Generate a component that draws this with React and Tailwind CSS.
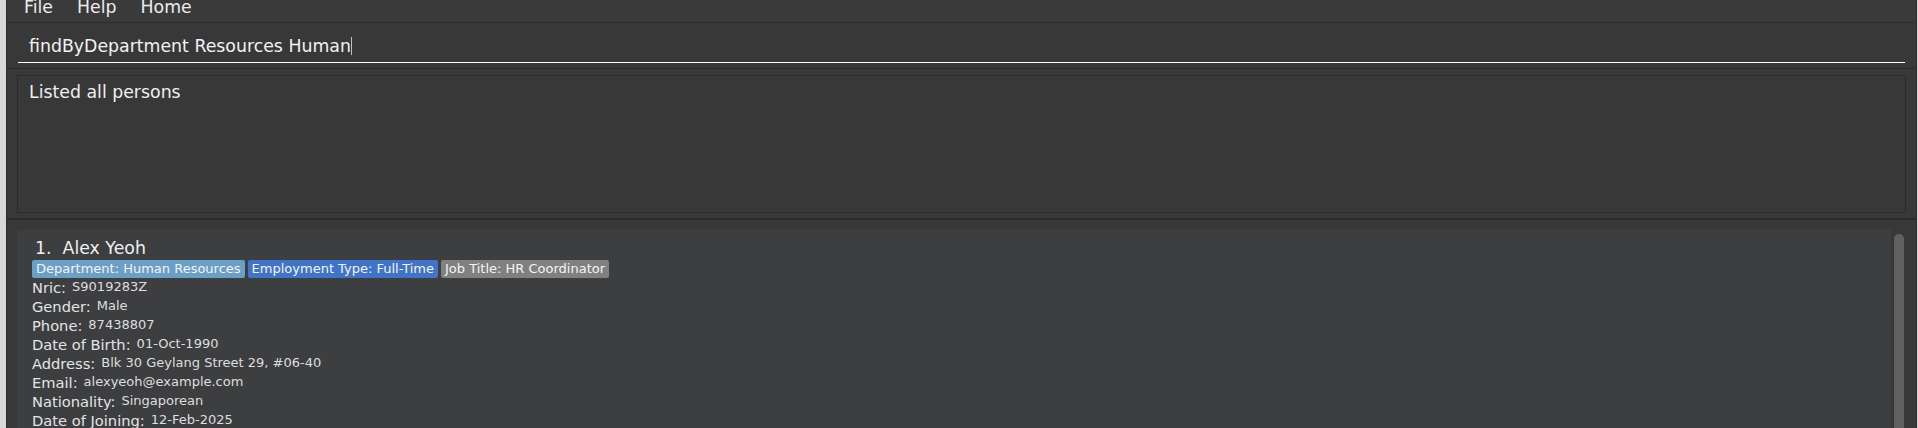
const person = {
  index: 1,
  name: "Alex Yeoh",
  tags: [
    { label: "Department: Human Resources", tone: "bg-[#6a9fc6]" },
    { label: "Employment Type: Full-Time", tone: "bg-[#3f74c9]" },
    { label: "Job Title: HR Coordinator", tone: "bg-[#808080]" },
  ],
  fields: [
    ["Nric:", "S9019283Z"],
    ["Gender:", "Male"],
    ["Phone:", "87438807"],
    ["Date of Birth:", "01-Oct-1990"],
    ["Address:", "Blk 30 Geylang Street 29, #06-40"],
    ["Email:", "alexyeoh@example.com"],
    ["Nationality:", "Singaporean"],
    ["Date of Joining:", "12-Feb-2025"],
  ],
};

function MenuBar() {
  return (
    <div className="h-[23px] shrink-0 flex items-end pb-[5px] pl-[5px] bg-[#3a3a3a] border-b border-[#2b2b2b] overflow-hidden">
      {["File", "Help", "Home"].map((item) => (
        <span key={item} className="px-[12px] leading-[20px] text-[17.33px] text-[#ececec]">
          {item}
        </span>
      ))}
    </div>
  );
}

function CommandBox() {
  return (
    <div className="h-[46px] shrink-0 px-[11px] bg-[#383838] border-b border-[#2b2b2b]">
      <div className="h-[40px] flex items-end pb-[6px] pl-[11px] border-b border-white">
        <span className="leading-[20px] text-[17.33px] text-[#f2f2f2]">
          findByDepartment Resources Human
        </span>
        <span className="w-px h-[18px] mb-[1px] bg-[#bdbdbd]" />
      </div>
    </div>
  );
}

function ResultDisplay() {
  return (
    <div className="h-[151px] shrink-0 pt-[6px] pb-[5px] px-[10px] bg-[#383838] border-b-2 border-[#2a2a2a]">
      <div className="h-full border border-[#2c2c2c] bg-[#383838] pt-[6px] pl-[11px]">
        <p className="leading-[20px] text-[17.33px] text-[#efefef]">Listed all persons</p>
      </div>
    </div>
  );
}

function PersonCard({ p }) {
  return (
    <div className="flex-1 bg-[#3c3e40] pt-[8px] pl-[15px]">
      <p className="pl-[3px] leading-[20px] text-[17.33px] text-[#f0f0f0] whitespace-pre">
        {p.index}.  {p.name}
      </p>
      <div className="flex gap-[3px] mt-[2px]">
        {p.tags.map((t) => (
          <span
            key={t.label}
            className={`h-[18px] px-[4px] rounded-[2px] leading-[18px] text-[13px] text-[#f4f4f4] ${t.tone}`}
          >
            {t.label}
          </span>
        ))}
      </div>
      <div className="flex flex-col">
        {p.fields.map(([label, value]) => (
          <div key={label} className="flex items-start gap-[6px] h-[19px]">
            <span className="leading-[19px] text-[14.67px] text-[#e4e4e4]">{label}</span>
            <span className="leading-[17px] text-[13px] text-[#dedede]">{value}</span>
          </div>
        ))}
      </div>
    </div>
  );
}

function PersonList() {
  return (
    <div className="flex-1 min-h-0 flex pt-[10px] pl-[10px] pr-[12px] bg-[#383838] overflow-hidden">
      <PersonCard p={person} />
      <div className="w-[10px] ml-[3px] mt-[4px] rounded-t-[5px] bg-[#616161]" />
    </div>
  );
}

export default function App() {
  return (
    <div className="w-[1918px] h-[428px] flex bg-[#d8d8d8] overflow-hidden font-['DejaVu_Sans',sans-serif]">
      <div className="w-[6px] shrink-0" />
      <div className="flex-1 flex flex-col border-l border-r border-[#2d2d2d] bg-[#383838]">
        <MenuBar />
        <CommandBox />
        <ResultDisplay />
        <PersonList />
      </div>
      <div className="w-px shrink-0" />
    </div>
  );
}
